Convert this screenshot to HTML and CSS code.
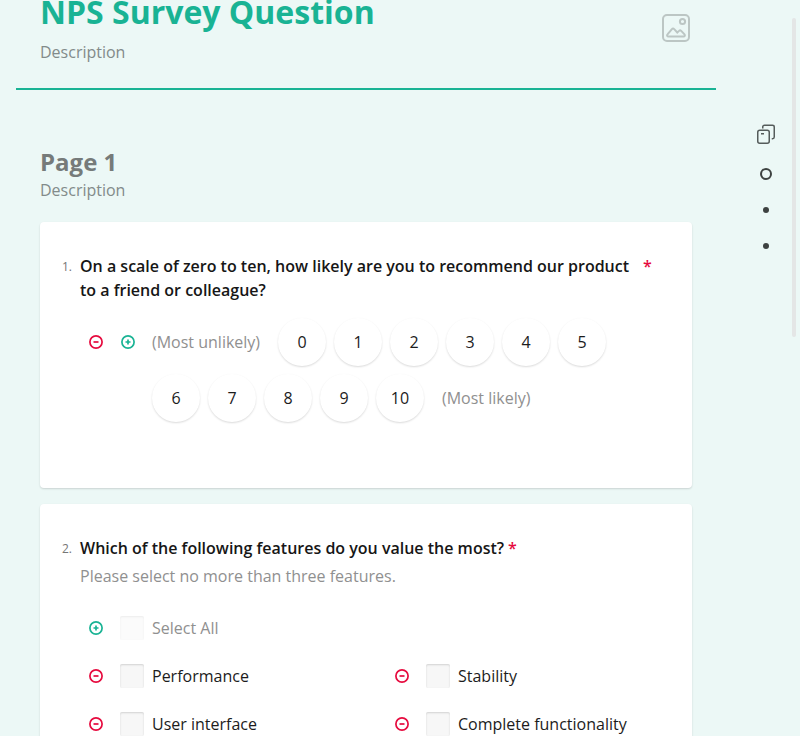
FILE: index.html
```html
<!DOCTYPE html>
<html lang="en">
<head>
<meta charset="utf-8">
<title>NPS Survey Question</title>
<link rel="stylesheet" href="styles.css">
</head>
<body>
<svg class="defs" width="0" height="0">
  <symbol id="minus" viewBox="0 0 16 16"><circle cx="8" cy="8" r="6.1"/><path d="M5.5 8h5"/></symbol>
  <symbol id="plus" viewBox="0 0 16 16"><circle cx="8" cy="8" r="6.1"/><path d="M5.5 8h5M8 5.5v5"/></symbol>
</svg>
<div class="designer">
  <main class="survey">
    <header class="header">
      <div class="heading">
        <h1>NPS Survey Question</h1>
        <p class="description">Description</p>
      </div>
      <svg class="logo" viewBox="0 0 32 32"><rect x="3" y="3" width="26" height="26" rx="4"/><circle cx="22.5" cy="9.5" r="2.6"/><path d="M8.600 24.600h14.800c1.400 0 1.900-1.200 1.100-2.200l-3.300-3.500c-.7-.7-1.500-.7-2.200 0l-1.700 1.600-3.100-3.300c-.8-.9-1.600-.9-2.300 0l-4.400 5.200c-.9 1-.4 2.200 1.100 2.200z"/></svg>
    </header>
    <div class="page">
      <h2>Page 1</h2>
      <p class="description">Description</p>
      <section class="card first">
        <div class="title"><span class="num">1.</span><h3 class="wrap">On a scale of zero to ten, how likely are you to recommend our product to a friend or colleague?</h3><span class="star">*</span></div>
        <div class="rating">
          <svg class="icon red"><use href="#minus"/></svg>
          <svg class="icon green"><use href="#plus"/></svg>
          <div class="scale">
            <span class="edge">(Most unlikely)</span>
            <span class="item">0</span><span class="item">1</span><span class="item">2</span><span class="item">3</span><span class="item">4</span><span class="item">5</span>
            <span class="item">6</span><span class="item">7</span><span class="item">8</span><span class="item">9</span><span class="item">10</span>
            <span class="edge max">(Most likely)</span>
          </div>
        </div>
      </section>
      <section class="card">
        <div class="title"><span class="num">2.</span><h3>Which of the following features do you value the most?</h3><span class="star">*</span></div>
        <p class="hint">Please select no more than three features.</p>
        <div class="choices">
          <div class="choice all"><svg class="icon green"><use href="#plus"/></svg><span class="box"></span><span class="label">Select All</span></div>
          <div class="choice"><svg class="icon red"><use href="#minus"/></svg><span class="box"></span><span class="label">Performance</span></div>
          <div class="choice"><svg class="icon red"><use href="#minus"/></svg><span class="box"></span><span class="label">Stability</span></div>
          <div class="choice"><svg class="icon red"><use href="#minus"/></svg><span class="box"></span><span class="label">User interface</span></div>
          <div class="choice"><svg class="icon red"><use href="#minus"/></svg><span class="box"></span><span class="label">Complete functionality</span></div>
        </div>
      </section>
    </div>
  </main>
  <nav class="navigator">
    <svg class="pages" viewBox="0 0 24 24"><rect x="3.750" y="8.250" width="11.500" height="13" rx="2"/><path d="M7 11.750h3M8.750 6.500V5c0-1 .7-1.700 1.700-1.700h8c1 0 1.800.7 1.800 1.700v10c0 1-.7 1.700-1.700 1.700h-.8"/></svg>
    <span class="current"></span>
    <span class="dot"></span>
    <span class="dot"></span>
  </nav>
  <div class="scrollbar"></div>
</div>
</body>
</html>
```
FILE: styles.css
```css
* { box-sizing: border-box; }
html, body { margin: 0; height: 736px; overflow: hidden; }
body { background: #ecf8f6; font: 16px/24px "Open Sans", "Segoe UI", sans-serif; color: #1c1c1c; }
h1, h2, h3, p { margin: 0; }
svg { fill: none; flex: none; }
.defs { position: absolute; }
.designer { display: flex; height: 736px; }
.survey { width: 700px; margin-left: 16px; flex: none; }
.header { display: flex; height: 90px; border-bottom: 2px solid #19b394; padding: 0 24px; justify-content: space-between; }
.heading { margin-top: -9px; }
h1 { font-size: 32px; line-height: 42px; font-weight: 700; color: #19b394; }
.description { color: #828b8a; }
.heading .description { margin-top: 7px; }
.logo { width: 32px; height: 32px; margin-top: 12px; stroke: #bcc6c4; stroke-width: 2; }
.page { padding: 56px 24px 0; }
h2 { font-size: 24px; line-height: 32px; font-weight: 700; color: #767b7a; }
.card { background: #fff; border-radius: 4px; box-shadow: 0 1px 2px rgba(0,0,0,.15); padding: 32px 24px 0 16px; margin-top: 16px; height: 266px; }
.card.first { margin-top: 20px; }
.title { display: flex; }
.num { width: 24px; padding-right: 8px; text-align: right; font-size: 12px; line-height: 25px; color: #767676; }
h3 { font-size: 16px; line-height: 24px; font-weight: 600; color: #161616; }
.wrap { width: 559px; }
.star { color: #e60a3e; font-weight: 600; margin-left: 4px; }
.rating { display: flex; padding: 16px 0 0 32px; }
.icon { width: 16px; height: 16px; stroke-width: 1.700; }
.rating .icon { margin: 16px 16px 0 0; }
.red { stroke: #e60a3e; }
.green { stroke: #19b394; }
.scale { display: flex; flex-wrap: wrap; gap: 8px; width: 460px; }
.edge { line-height: 48px; color: #909090; margin-right: 10px; }
.edge.max { margin: 0 0 0 10px; }
.item { width: 48px; height: 48px; border-radius: 50%; text-align: center; line-height: 48px; box-shadow: 0 1px 2px rgba(0,0,0,.15); }
.hint { margin: 3px 0 0 24px; color: #909090; }
.choices { display: grid; grid-template-columns: 306px 306px; row-gap: 24px; padding: 28px 0 0 32px; }
.choice { display: flex; align-items: center; height: 24px; }
.choice.all { grid-column: 1 / 3; }
.box { width: 24px; height: 24px; margin: 0 8px 0 16px; border-radius: 2px; background: #f7f7f7; box-shadow: inset 0 1px 2px rgba(0,0,0,.15); }
.all .box { opacity: .4; }
.all .label { color: #909090; }
.navigator { display: flex; flex-direction: column; align-items: center; width: 24px; margin-left: 38px; padding-top: 122px; }
.pages { width: 24px; height: 24px; stroke: #555c5b; stroke-width: 1.500; }
.current { width: 12px; height: 12px; border: 2px solid #3d4241; border-radius: 50%; margin-top: 22px; }
.dot { width: 6px; height: 6px; border-radius: 50%; background: #3d4241; margin-top: 27px; }
.dot + .dot { margin-top: 30px; }
.scrollbar { width: 4px; height: 319px; margin: 18px 0 0 14px; border-radius: 2px; background: #e4e6e6; }
```
